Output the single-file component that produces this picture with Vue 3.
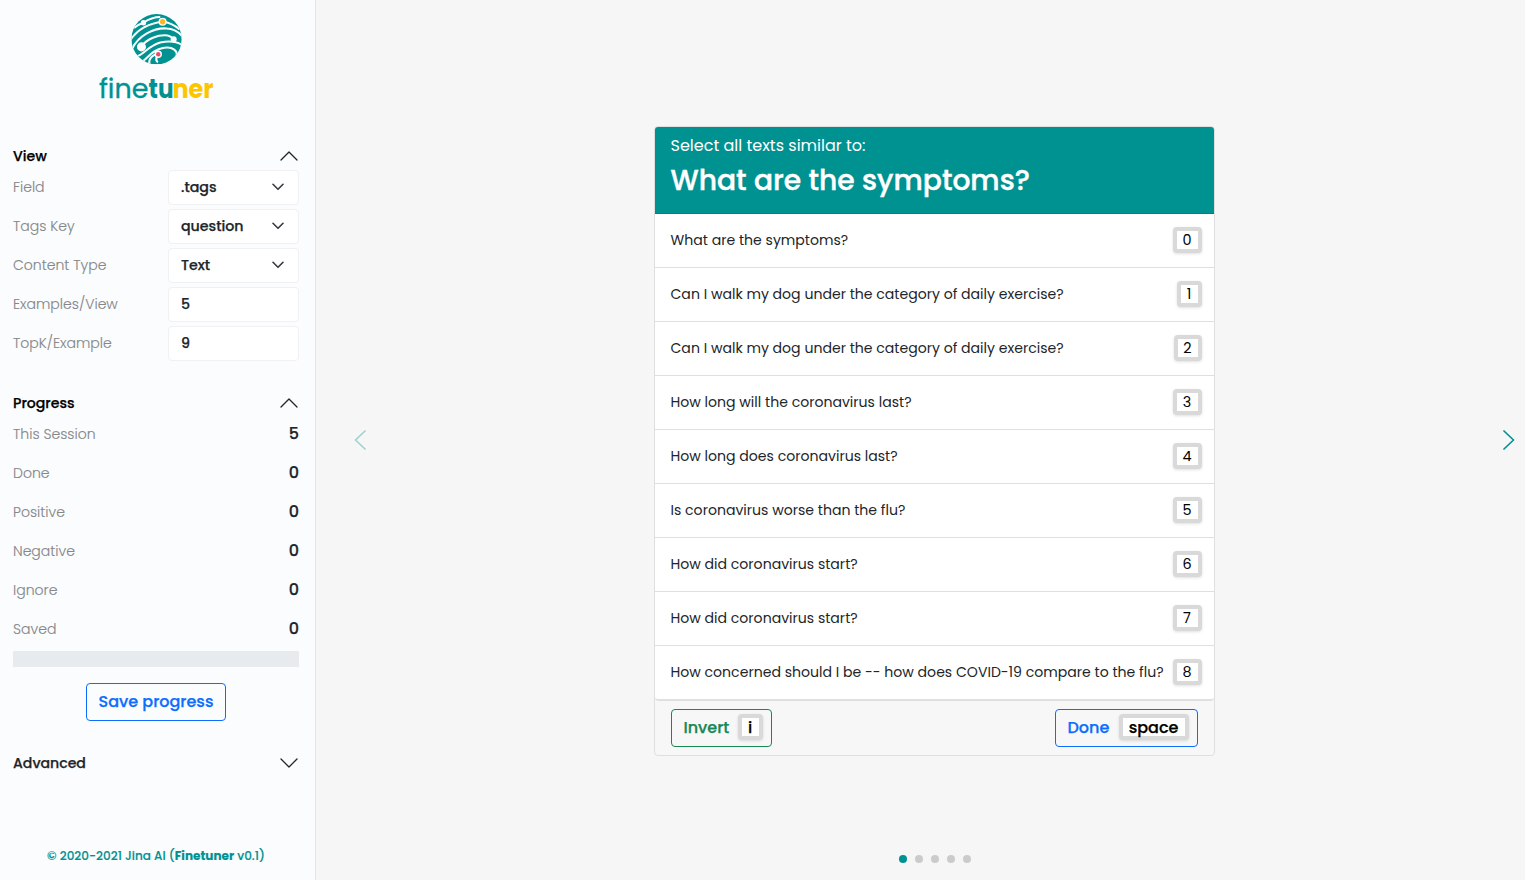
<script setup>
import { ref } from 'vue'

const fields = [
  { label: 'Field', value: '.tags', select: true },
  { label: 'Tags Key', value: 'question', select: true },
  { label: 'Content Type', value: 'Text', select: true },
  { label: 'Examples/View', value: '5', select: false },
  { label: 'TopK/Example', value: '9', select: false },
]
const stats = [
  { label: 'This Session', value: 5 },
  { label: 'Done', value: 0 },
  { label: 'Positive', value: 0 },
  { label: 'Negative', value: 0 },
  { label: 'Ignore', value: 0 },
  { label: 'Saved', value: 0 },
]
const items = [
  'What are the symptoms?',
  'Can I walk my dog under the category of daily exercise?',
  'Can I walk my dog under the category of daily exercise?',
  'How long will the coronavirus last?',
  'How long does coronavirus last?',
  'Is coronavirus worse than the flu?',
  'How did coronavirus start?',
  'How did coronavirus start?',
  'How concerned should I be -- how does COVID-19 compare to the flu?',
]
const page = ref(0)
</script>

<template>
  <div class="app">
    <aside class="sidebar">
      <svg class="logo" width="116" height="92" viewBox="0 0 116 92">
        <defs>
          <clipPath id="globe"><circle cx="75" cy="75" r="75" /></clipPath>
        </defs>
        <g transform="translate(32.4 2) scale(0.3355)">
          <g clip-path="url(#globe)">
            <rect width="150" height="150" fill="#009191" />
            <g fill="none" stroke="#fbfcfe" stroke-width="6">
              <path d="M8 42C18 33 26 29 36 26C52 15 66 9 86 9" />
              <path d="M-2 76C18 47 48 28 93 23C115 25 130 34 144 46" />
              <path d="M2 104C21 64 66 41 104 43C128 44 143 56 151 66" />
              <path d="M30 97C45 74 80 61 108 64C118 66 122 71 126 75" />
              <path d="M14 127C40 120 48 96 86 85C112 79 136 83 151 92" />
              <path d="M33 141C50 132 56 112 88 103C122 92 146 112 130 134" />
              <path d="M54 151C50 134 62 121 80 120" />
              <path d="M80 120C74 130 70 138 79 144" />
            </g>
            <g fill="#fbfcfe">
              <circle cx="36" cy="26" r="8" />
              <circle cx="93" cy="23" r="12" />
              <circle cx="30" cy="98" r="13.5" />
              <circle cx="126" cy="75" r="9" />
              <circle cx="80" cy="120" r="11" />
            </g>
            <circle cx="93" cy="23" r="8" fill="#fdb827" />
            <circle cx="80" cy="120" r="6.5" fill="#eb4b66" />
          </g>
        </g>
        <text class="wordmark" y="86"><tspan class="fine" x="0" textLength="49.5" lengthAdjust="spacingAndGlyphs">fine</tspan><tspan class="tu" textLength="25" lengthAdjust="spacingAndGlyphs">tu</tspan><tspan class="ner" dx="-1" textLength="41" lengthAdjust="spacingAndGlyphs">ner</tspan></text>
      </svg>

      <section class="view">
        <h2 class="section-title">
          <span>View</span>
          <svg width="18" height="10" viewBox="0 0 18 10"><path d="M1 9L9 1L17 9" /></svg>
        </h2>
        <div v-for="f in fields" :key="f.label" class="row">
          <span class="label">{{ f.label }}</span>
          <div class="control">
            <span>{{ f.value }}</span>
            <svg v-if="f.select" width="12" height="8" viewBox="0 0 12 8"><path d="M1 1.3L6 6.3L11 1.3" /></svg>
          </div>
        </div>
      </section>

      <section class="progress">
        <h2 class="section-title">
          <span>Progress</span>
          <svg width="18" height="10" viewBox="0 0 18 10"><path d="M1 9L9 1L17 9" /></svg>
        </h2>
        <div v-for="s in stats" :key="s.label" class="row">
          <span class="label">{{ s.label }}</span>
          <span class="count">{{ s.value }}</span>
        </div>
        <div class="bar"></div>
        <button class="btn blue save">Save progress</button>
      </section>

      <h2 class="section-title advanced">
        <span>Advanced</span>
        <svg width="18" height="10" viewBox="0 0 18 10"><path d="M1 1L9 9L17 1" /></svg>
      </h2>

      <footer class="copyright">© 2020-2021 Jina AI (<b>Finetuner</b> v0.1)</footer>
    </aside>

    <main class="stage">
      <svg class="arrow prev" width="12" height="20" viewBox="0 0 12 20"><path d="M11 1L1.5 10L11 19" /></svg>
      <div class="card">
        <header class="card-head">
          <p>Select all texts similar to:</p>
          <h1>What are the symptoms?</h1>
        </header>
        <ul class="list">
          <li v-for="(t, i) in items" :key="i">
            <span>{{ t }}</span>
            <kbd :class="'key-' + i">{{ i }}</kbd>
          </li>
        </ul>
        <footer class="card-foot">
          <button class="btn green">Invert <kbd class="key-i">i</kbd></button>
          <button class="btn blue done">Done <kbd class="key-space">space</kbd></button>
        </footer>
      </div>
      <svg class="arrow next" width="12" height="20" viewBox="0 0 12 20"><path d="M1 1L10.5 10L1 19" /></svg>
      <nav class="dots">
        <i v-for="n in 5" :key="n" :class="{ active: page === n - 1 }" @click="page = n - 1"></i>
      </nav>
    </main>
  </div>
</template>

<style scoped>
.app {
  display: flex;
  width: 100%;
  height: 880px;
  overflow: hidden;
  background: #f6f6f6;
  color: #212529;
  font-family: Poppins, Inter, "Open Sans", sans-serif;
}
.app *, .app *::before { box-sizing: border-box; }
h1, h2, p, ul { margin: 0; padding: 0; }
.sidebar {
  display: flex;
  flex-direction: column;
  flex: none;
  width: 316px;
  padding: 12px 16px 0 13px;
  background: #fbfcfe;
  border-right: 1px solid #e3e5e7;
}
.logo { display: block; flex: none; margin-left: 85.5px; overflow: visible; }
.wordmark { font-size: 26px; }
.fine { font-weight: 400; fill: #009191; stroke: #009191; stroke-width: 0.3px; }
.tu { font-weight: 700; fill: #009191; }
.ner { font-weight: 700; fill: #fdc500; }
.view { margin-top: 41px; }
.section-title {
  display: flex;
  align-items: center;
  justify-content: space-between;
  height: 23px;
  color: #000;
  font-size: 14.1px;
  font-weight: 500;
  -webkit-text-stroke: 0.25px currentColor;
}
.section-title svg { margin: 0 1px 2px 0; }
svg path { fill: none; }
.section-title path { stroke: #212529; stroke-width: 1.3; stroke-linecap: round; stroke-linejoin: round; }
.row { display: flex; align-items: center; justify-content: space-between; height: 39px; }
.label { color: #858789; font-size: 14.05px; font-weight: 300; -webkit-text-stroke: 0.12px currentColor; }
.control {
  display: flex;
  align-items: center;
  justify-content: space-between;
  width: 131px;
  height: 35px;
  padding: 0 14px 1px 12px;
  border: 1px solid #eff1f3;
  border-radius: 4px;
  background: #fff;
  font-size: 14.2px;
  font-weight: 500;
}
.control span { -webkit-text-stroke: 0.25px currentColor; }
.control path { stroke: #343a40; stroke-width: 1.6; stroke-linecap: round; stroke-linejoin: round; }
.progress { display: flex; flex-direction: column; margin-top: 29px; }
.count { margin-top: -2px; font-size: 16px; font-weight: 500; -webkit-text-stroke: 0.25px currentColor; }
.bar { height: 16px; margin-top: 2px; background: #e8ebee; }
.btn {
  display: flex;
  align-items: center;
  height: 38px;
  padding: 0 12px;
  border: 1px solid currentColor;
  border-radius: 4px;
  background: transparent;
  font-family: inherit;
  font-size: 16px;
  font-weight: 500;
  -webkit-text-stroke: 0.25px currentColor;
  white-space: nowrap;
}
.blue { color: #0d6efd; }
.green { color: #198754; }
.save { justify-content: center; align-self: center; width: 140px; margin: 16px 0 0 0; padding-bottom: 2px; }
.advanced { margin-top: 31px; color: #212529; }
.copyright {
  margin: auto 0 15px;
  color: #009191;
  text-align: center;
  font-size: 12px;
  line-height: 18px;
  font-weight: 500;
  letter-spacing: 0.02px;
  -webkit-text-stroke: 0.15px currentColor;
}
.copyright b { font-weight: 700; }
.stage { position: relative; display: flex; flex: 1; justify-content: center; align-items: flex-start; padding: 126px 0 0 27px; }
.card { width: 561px; border: 1px solid #dfdfdf; border-radius: 4px; background: #f7f7f7; overflow: hidden; }
.card-head {
  height: 87px;
  padding: 6px 16px 0;
  border-bottom: 1px solid #008282;
  background: #009191;
  color: #fff;
}
.card-head p { font-size: 16px; line-height: 25px; font-weight: 400; white-space: nowrap; }
.card-head h1 {
  margin-top: 5px;
  font-size: 28.2px;
  line-height: 35px;
  font-weight: 500;
  -webkit-text-stroke: 0.4px currentColor;
  white-space: nowrap;
}
.list { border-bottom: 2px solid #dfdfdf; border-radius: 0 0 4px 4px; background: #fff; list-style: none; }
.list li {
  display: flex;
  align-items: center;
  justify-content: space-between;
  height: 54px;
  padding: 0 12px 0 16px;
  border-bottom: 1px solid #dfdfdf;
  font-size: 14.08px;
  font-weight: 400;
  white-space: nowrap;
}
.list li:last-child { height: 53px; border-bottom: 0; }
.list kbd { margin-bottom: 1px; }
kbd {
  display: inline-flex;
  align-items: center;
  justify-content: center;
  flex: none;
  width: 29px;
  height: 26px;
  border: 4px solid #d9d9d9;
  border-radius: 4px;
  background: #fff;
  color: #000;
  font-family: inherit;
  font-size: 14.4px;
  box-shadow: 0 1px 3px rgba(0, 0, 0, 0.12);
}
.list .key-1 { width: 25px; }
.list .key-2 { width: 28px; }
.btn .key-i { width: 25px; font-size: 16px; }
.btn .key-space { width: 70px; font-size: 16px; }
.card-foot { display: flex; justify-content: space-between; height: 54px; padding: 8px 16px 0; }
.green, .done { padding: 0 8px 2px 12px; justify-content: space-between; }
.green { width: 101px; }
.done { width: 143px; }
.arrow { position: absolute; top: 430px; }
.arrow path { stroke: #009191; stroke-width: 1.7; stroke-linecap: round; stroke-linejoin: round; }
.prev { left: 38px; opacity: 0.35; }
.next { right: 10px; }
.dots { position: absolute; bottom: 17px; left: 583px; display: flex; gap: 8px; }
.dots i { width: 8px; height: 8px; border-radius: 50%; background: #cbcbcb; }
.dots .active { background: #009191; }
</style>

<style>
body { margin: 0; background: #f6f6f6; }
</style>
